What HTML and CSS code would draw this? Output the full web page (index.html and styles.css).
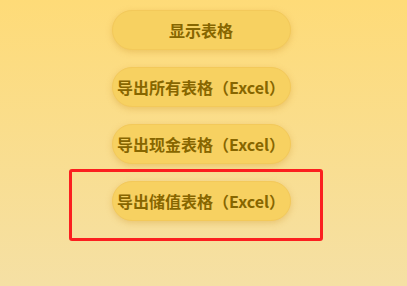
FILE: index.html
```html
<!DOCTYPE html>
<html lang="zh">
<head>
<meta charset="utf-8">
<link rel="stylesheet" href="styles.css">
</head>
<body>
<div class="page">
  <div class="actions">
    <button class="btn">显示表格</button>
    <button class="btn">导出所有表格（Excel）</button>
    <button class="btn">导出现金表格（Excel）</button>
    <button class="btn">导出储值表格（Excel）</button>
  </div>
  <div class="highlight"></div>
</div>
</body>
</html>
```
FILE: styles.css
```css
html, body {
  margin: 0;
  padding: 0;
  height: 100%;
}
body {
  background: linear-gradient(180deg, #fedb78 0%, #f5e0a4 100%);
  font-family: "Noto Sans CJK SC", "Noto Sans", sans-serif;
}
.page {
  position: relative;
  height: 286px;
}
.actions {
  display: flex;
  flex-direction: column;
  align-items: center;
  gap: 17px;
  padding: 10px 5px 0 0;
}
.btn {
  width: 179px;
  height: 40px;
  box-sizing: border-box;
  border: 1px solid #f3c95a;
  border-radius: 20px;
  background: #f7d161;
  color: #876600;
  font-family: "Noto Sans CJK SC", sans-serif;
  font-weight: 700;
  font-size: 16px;
  white-space: nowrap;
  text-align: center;
  padding: 0 4px;
  box-shadow: 0 2px 6px rgba(205, 150, 40, 0.35);
}
.highlight {
  position: absolute;
  left: 69px;
  top: 169px;
  width: 254px;
  height: 72px;
  box-sizing: border-box;
  border: 3px solid #fb1f1f;
  border-radius: 3px;
}
```
